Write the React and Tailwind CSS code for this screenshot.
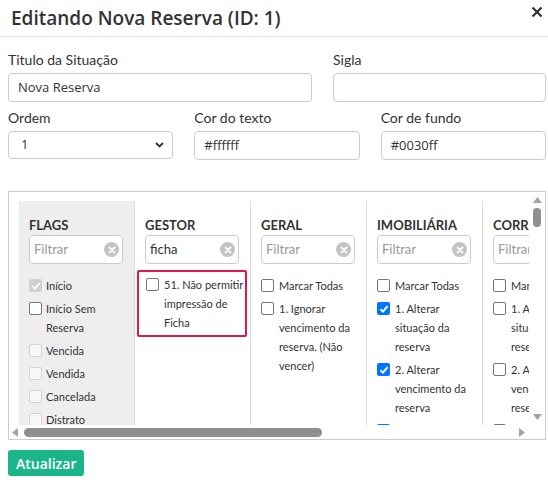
import React, { useState } from "react";

const font = { fontFamily: '"Open Sans", "Noto Sans", sans-serif' };
const thin = { fontFamily: 'Lato, "Open Sans", sans-serif' };

// checkbox states: "off", "on", "dis-on", "dis-off"
const Box = ({ state }) => {
  if (state === "on") {
    return (
      <span className="mt-[3px] flex h-[13px] w-[13px] shrink-0 items-center justify-center rounded-[2px] bg-[#0075ff]">
        <svg width="10" height="10" viewBox="0 0 10 10">
          <path d="M1.5 5.2 L4 7.6 L8.6 2.2" fill="none" stroke="#fff" strokeWidth="2" />
        </svg>
      </span>
    );
  }
  if (state === "dis-on") {
    return (
      <span className="mt-[3px] flex h-[13px] w-[13px] shrink-0 items-center justify-center rounded-[2px] bg-[#cfcfcf]">
        <svg width="10" height="10" viewBox="0 0 10 10">
          <path d="M1.5 5.2 L4 7.6 L8.6 2.2" fill="none" stroke="#fff" strokeWidth="2" />
        </svg>
      </span>
    );
  }
  if (state === "dis-off") {
    return <span className="mt-[3px] h-[13px] w-[13px] shrink-0 rounded-[2px] border border-[#d4d4d4] bg-[#f7f7f7]" />;
  }
  return <span className="mt-[3px] h-[13px] w-[13px] shrink-0 rounded-[2px] border border-[#767676] bg-white" />;
};

const Item = ({ state = "off", text, gap = "gap-[5px]" }) => (
  <div className={`flex shrink-0 items-start ${gap}`}>
    <Box state={state} />
    <span className="leading-[19px] text-[#333]">{text}</span>
  </div>
);

const Filter = ({ value }) => (
  <div className="flex h-[29px] w-[94px] shrink-0 items-center justify-between rounded-[4px] border border-[#cccccc] bg-white pl-[4px] pr-[3px]">
    <span className={`text-[13px] ${value ? "text-[#333]" : "text-[#9a9a9a]"}`}>{value || "Filtrar"}</span>
    <span className="flex h-[15px] w-[15px] shrink-0 items-center justify-center rounded-full bg-[#c4c4c4]">
      <svg width="8" height="8" viewBox="0 0 8 8">
        <path d="M1.5 1.5 L6.5 6.5 M6.5 1.5 L1.5 6.5" stroke="#fff" strokeWidth="1.8" strokeLinecap="round" />
      </svg>
    </span>
  </div>
);

const Heading = ({ children }) => (
  <div className="h-[20px] shrink-0 whitespace-nowrap text-[13px] font-bold leading-[20px] text-[#333]">{children}</div>
);

const Column = ({ title, filter, bg = "bg-white", gap, children }) => (
  <div className={`flex w-[116px] shrink-0 flex-col border-r border-[#d9d9d9] pl-[10px] pr-[8px] pt-[14px] ${bg}`}>
    <Heading>{title}</Heading>
    <Filter value={filter} />
    <div className="mt-[12px] flex flex-col gap-[4px] text-[11px]">
      {React.Children.map(children, (c) => React.cloneElement(c, gap ? { gap } : {}))}
    </div>
  </div>
);

const Field = ({ label, children }) => (
  <div className="flex flex-col">
    <label className="mb-[3px] text-[14px] leading-[20px] text-[#333]" style={thin}>
      {label}
    </label>
    {children}
  </div>
);

const TextBox = ({ value }) => (
  <div className="flex h-[29px] items-center rounded-[4px] border border-[#cccccc] bg-white px-[9px] text-[13px] text-[#333]">
    {value}
  </div>
);

export default function App() {
  const [ordem] = useState("1");

  return (
    <div className="h-[490px] w-[548px] overflow-hidden bg-white" style={font}>
      {/* header */}
      <div className="flex h-[37px] items-center justify-between border-b border-[#e5e5e5] pl-[11px] pr-[5px]">
        <h1 className="text-[19px] font-semibold text-[#333]">Editando Nova Reserva (ID: 1)</h1>
        <svg width="12" height="12" viewBox="0 0 12 12" className="mb-[12px]">
          <path d="M1.5 1.5 L10.5 10.5 M10.5 1.5 L1.5 10.5" stroke="#333" strokeWidth="2.2" />
        </svg>
      </div>

      <div className="pl-[8px] pr-[2px] pt-[13px]">
        <div className="grid grid-cols-[304px_213px] gap-x-[21px]">
          <Field label="Titulo da Situação">
            <TextBox value="Nova Reserva" />
          </Field>
          <Field label="Sigla">
            <TextBox value="" />
          </Field>
        </div>

        <div className="mt-[6px] grid grid-cols-3 gap-x-[21px]">
          <Field label="Ordem">
            <div className="flex h-[28px] items-center justify-between rounded-[4px] border border-[#cccccc] bg-white pl-[12px] pr-[8px] text-[13px] text-[#333]">
              <span>{ordem}</span>
              <svg width="9" height="6" viewBox="0 0 9 6">
                <path d="M1 1 L4.5 4.5 L8 1" fill="none" stroke="#333" strokeWidth="1.8" />
              </svg>
            </div>
          </Field>
          <Field label="Cor do texto">
            <TextBox value="#ffffff" />
          </Field>
          <Field label="Cor de fundo">
            <TextBox value="#0030ff" />
          </Field>
        </div>

        {/* permissions panel */}
        <div className="mt-[31px] flex h-[249px] flex-col border border-[#cccccc]" style={thin}>
          <div className="flex min-h-0 flex-1">
            <div className="flex flex-1 overflow-hidden pl-[10px] pt-[9px]">
              <Column title="FLAGS" bg="bg-[#eeeeee]" gap="gap-[4px]">
                <Item state="dis-on" text="Início" />
                <Item text="Início Sem Reserva" />
                <Item state="dis-off" text="Vencida" />
                <Item state="dis-off" text="Vendida" />
                <Item state="dis-off" text="Cancelada" />
                <Item state="dis-off" text="Distrato" />
              </Column>
              <div className="flex w-[116px] shrink-0 flex-col border-r border-[#d9d9d9] pt-[14px]">
                <div className="pl-[10px]">
                  <Heading>GESTOR</Heading>
                  <Filter value="ficha" />
                </div>
                <div className="ml-[2px] mr-[3px] mt-[6px] shrink-0 rounded-[2px] border-2 border-[#e0194c] pb-[3px] pl-[7px] pt-[3px] text-[11px]">
                  <Item text="51. Não permitir impressão de Ficha" />
                </div>
              </div>
              <Column title="GERAL">
                <Item text="Marcar Todas" />
                <Item text="1. Ignorar vencimento da reserva. (Não vencer)" />
              </Column>
              <Column title="IMOBILIÁRIA">
                <Item text="Marcar Todas" />
                <Item state="on" text="1. Alterar situação da reserva" />
                <Item state="on" text="2. Alterar vencimento da reserva" />
                <Item state="on" text="3. Alterar vendedor" />
              </Column>
              <Column title="CORRETOR">
                <Item text="Marcar Todas" />
                <Item text="1. Alterar situação da reserva" />
                <Item text="2. Alterar vencimento da reserva" />
                <Item text="3. Alterar vendedor" />
              </Column>
            </div>
            {/* vertical scrollbar */}
            <div className="flex w-[16px] shrink-0 flex-col items-center justify-between pb-[5px] pt-[5px]">
              <div className="flex flex-col items-center">
                <svg width="9" height="6" viewBox="0 0 9 6">
                  <path d="M4.5 0 L9 6 L0 6 Z" fill="#a3a3a3" />
                </svg>
                <div className="mt-[5px] h-[19px] w-[8px] rounded-full bg-[#8f8f8f]" />
              </div>
              <svg width="9" height="6" viewBox="0 0 9 6">
                <path d="M0 0 L9 0 L4.5 6 Z" fill="#a3a3a3" />
              </svg>
            </div>
          </div>
          {/* horizontal scrollbar */}
          <div className="flex h-[14px] shrink-0 items-center pl-[3px] pr-[20px]">
            <svg width="6" height="9" viewBox="0 0 6 9">
              <path d="M6 0 L6 9 L0 4.5 Z" fill="#a3a3a3" />
            </svg>
            <div className="ml-[6px] h-[9px] w-[298px] rounded-full bg-[#8f8f8f]" />
            <div className="flex-1" />
            <svg width="6" height="9" viewBox="0 0 6 9">
              <path d="M0 0 L6 4.5 L0 9 Z" fill="#a3a3a3" />
            </svg>
          </div>
        </div>

        <button className="mt-[10px] h-[26px] rounded-[3px] bg-[#1ab588] px-[8px] text-[14px] font-semibold text-white">
          Atualizar
        </button>
      </div>
    </div>
  );
}
